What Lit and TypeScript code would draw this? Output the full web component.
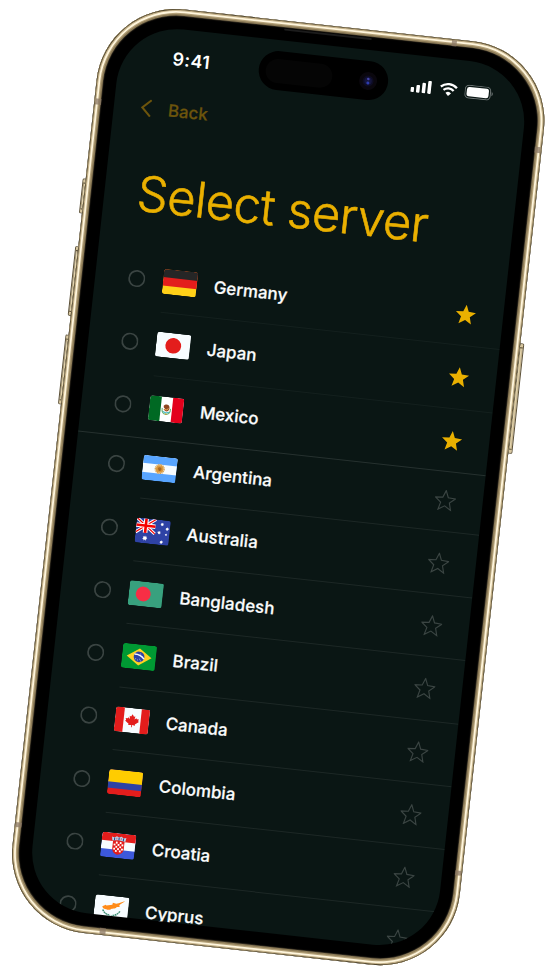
import { LitElement, html, svg, css } from "lit";
import { customElement, property } from "lit/decorators.js";
import { classMap } from "lit/directives/class-map.js";

const STAR = "M10 0.6 L12.6 7.1 L19.6 7.6 L14.2 12.1 L16 19 L10 15.2 L4 19 L5.8 12.1 L0.4 7.6 L7.4 7.1 Z";

const star = (x: number, y: number, r: number) => {
  const pts: string[] = [];
  for (let i = 0; i < 14; i++) {
    const a = (Math.PI * i) / 7 - Math.PI / 2;
    const k = i % 2 ? r * 0.55 : r;
    pts.push(`${(x + k * Math.cos(a)).toFixed(2)},${(y + k * Math.sin(a)).toFixed(2)}`);
  }
  return svg`<polygon points=${pts.join(" ")} fill="#fff"/>`;
};

const bands = (a: string, b: string, c: string, h1: number, h2: number) => svg`
  <rect width="34" height="25" fill=${c}/>
  <rect width="34" height=${h2} fill=${b}/>
  <rect width="34" height=${h1} fill=${a}/>`;

const sides = (a: string, b: string, c: string, w: number) => svg`
  <rect width="34" height="25" fill=${b}/>
  <rect width=${w} height="25" fill=${a}/>
  <rect x=${34 - w} width=${w} height="25" fill=${c}/>`;

const checks = [0, 1, 2, 3, 4].flatMap((r) => [0, 1, 2, 3, 4].map((c) => [r, c])).filter(([r, c]) => (r + c) % 2 === 1);

const flags: Record<string, unknown> = {
  Germany: bands("#262626", "#e31d1c", "#ffd018", 8.3, 16.7),
  Japan: svg`<rect width="34" height="25" fill="#f7fcff"/><circle cx="17" cy="12.5" r="7.8" fill="#e31d1c"/>`,
  Mexico: svg`${sides("#006923", "#fff", "#e3011c", 11.4)}
    <path d="M12.9 11.5c-.4 4 1.5 6 4.1 6s4.5-2 4.1-6" fill="none" stroke="#6fb27a" stroke-width="1.1"/>
    <path d="M14.1 9.2c1.4-2.2 4.800-2.400 5.700.2.9 2.400-.5 4.500-2.100 5.200-1.600-.1-2.900-.9-3.400-2.100l1.700-.4-1.600-1.300z" fill="#8f4620"/>
    <path d="M15 12.4l2 .7 2.2-1.6" fill="none" stroke="#f4b459" stroke-width=".9"/>
    <path d="M14 15l3 1.1 3-1.1" fill="none" stroke="#3cb8c4" stroke-width="1"/>
    <circle cx="17" cy="17.3" r=".8" fill="#e39c1f"/>`,
  Argentina: svg`${bands("#58a5ff", "#f7fcff", "#58a5ff", 8, 17)}
    <circle cx="17" cy="12.5" r="4.3" fill="none" stroke="#dba352" stroke-width="1.5" stroke-dasharray="1.1 .5"/>
    <circle cx="17" cy="12.5" r="3.7" fill="#db9a3c"/><circle cx="17" cy="12.5" r="2" fill="#b87327"/>
    <path d="M16 12.2h.6m.9 0h.6m-1.6 1.2h1.2" stroke="#6b3d10" stroke-width=".5"/>`,
  Australia: svg`<rect width="34" height="25" fill="#2e42a5"/>
    <rect width="19" height="14.5" fill="#2b409a"/>
    <path d="M0 0L19 14.5M19 0L0 14.5" stroke="#fff" stroke-width="3.2"/>
    <path d="M0 0L19 14.5M19 0L0 14.5" stroke="#f50100" stroke-width="1.3"/>
    <path d="M9.5 0V14.5M0 7.25H19" stroke="#fff" stroke-width="4.6"/>
    <path d="M9.5 0V14.5M0 7.25H19" stroke="#f50100" stroke-width="2.6"/>
    ${star(9.8, 19.8, 2.7)}${star(26.3, 22.1, 1.9)}${star(23.2, 12.8, 1.9)}${star(25.5, 4.4, 1.9)}${star(30.8, 8.5, 1.9)}${star(30.2, 14.2, 1.3)}`,
  Bangladesh: svg`<rect width="34" height="25" fill="#38a17e"/><circle cx="14.3" cy="12.5" r="7.4" fill="#f72e45"/>`,
  Brazil: svg`<rect width="34" height="25" fill="#009933"/>
    <path d="M17 4.1L29.3 12.5 17 21.2 4.8 12.5Z" fill="#ffd221"/>
    <circle cx="17" cy="12.5" r="5.3" fill="#2e42a5"/>
    <path d="M12.2 10.2c3.6-.3 7.2 1 9.8 3.9" fill="none" stroke="#f7fcff" stroke-width="1.5"/>
    <path d="M13.5 14.7h.8m1.2 1h.8m1.2-1h.8m0 1.6h.8m-1.2-6.8h.8" stroke="#cdd4f4" stroke-width=".8"/>`,
  Canada: svg`${sides("#e31d1c", "#f7fcff", "#e31d1c", 8.6)}
    <path d="M17 6.2l1.4 2.4 1.4-.6-.5 3.3 1.7-1.6.6 1.1 2-.2-.7 1.9 1 .7-3.8 3 .3 1.1-3-.3v2.3h-.8V17l-3 .3.3-1.1-3.8-3 1-.7-.7-1.9 2 .2.6-1.1 1.7 1.6-.5-3.3 1.4.6z" fill="#e31d1c"/>`,
  Colombia: bands("#ffcc00", "#2e42a5", "#e31d1c", 12.5, 18.8),
  Croatia: svg`${bands("#e31d1c", "#f7fcff", "#3d58db", 8.3, 16.7)}
    <path d="M11.3 7.6h11.4v7.8c0 3.6-2.6 5.6-5.7 6.2-3.1-.6-5.7-2.6-5.7-6.2z" fill="#e31d1c"/>
    ${checks.map(([r, c]) => svg`<rect x=${12.3 + c * 1.95} y=${8.6 + r * 2.1} width="1.75" height="1.9" fill="#fff"/>`)}
    <path d="M10.6 7.9l-.7-4 2.7.8 2-1.5 2.4 1 2.4-1 2 1.5 2.7-.8-.7 4c-4-1-8.800-1-12.800 0z" fill="#b9d5ee"/>
    <path d="M12.600 4.800v2.600M17 4.300V7M21.400 4.800v2.600" stroke="#2d4a8d" stroke-width="1.100"/>
    <path d="M14.800 4.600v1.900M19.200 4.600v1.900" stroke="#d8505a" stroke-width=".8"/>`,
  Cyprus: svg`<rect width="34" height="25" fill="#f7fcff"/>
    <path d="M7.800 11.300l3.300-1.900.6 .7 5.800-1.400.3-2.100 3.400.7c3.200-.9 5.900-2.100 8.500-3.600-1.600 2-4.300 3.500-5.300 4.700l.5 1.700-2.800.3c-1.500 2.600-4.600 1.300-6.300 3.500-2 .3-3.600.7-4.500-.2-2 .2-3-.9-3.500-2.400z" fill="#ff8c1a"/>
    <path d="M8.600 14.500c1.800 3.300 4.600 4.800 7.800 5.200M25.600 14.500c-1.800 3.300-4.600 4.800-7.800 5.200" fill="none" stroke="#3f8f74" stroke-width="1.500" stroke-dasharray="1.800 .5"/>`,
};

@customElement("server-row")
class ServerRow extends LitElement {
  @property() name = "";
  @property({ type: Boolean }) favorite = false;

  static styles = css`
    :host { display: flex; height: 63.25px; align-items: center; padding-left: 33px; box-sizing: border-box; position: relative; }
    .radio { display: block; width: 17.400px; height: 17.400px; fill: none; stroke: #3a4442; stroke-width: 1.700; }
    .flag { display: block; width: 34.5px; height: 25px; margin-left: 17.600px; }
    .flag svg { display: block; width: 100%; height: 100%; }
    .name { flex: 1; margin-left: 16.700px; font: 500 16.900px/24px Inter, sans-serif; color: #fbfcfc; -webkit-text-stroke: .25px #fbfcfc; letter-spacing: 0.06px; white-space: nowrap; transform: translateY(-.4px); }
    .star { display: block; width: 21px; height: 21px; margin-right: 27px; fill: none; stroke: #3b4543; stroke-width: 1.1; }
    .star.on { fill: #eab000; stroke: none; }
    .line { position: absolute; left: 69px; right: 0; bottom: 0; height: 1px; background: #1d2826; }
    :host([favorite]) .line { background: #14201e; }
    :host([last]) .line { left: 0; background: #26312f; }
  `;

  render() {
    return html`
      <svg class="radio" viewBox="0 0 17 17"><circle cx="8.5" cy="8.5" r="7.600"/></svg>
      <span class="flag"><svg viewBox="0 0 34 25" preserveAspectRatio="none">
        <defs><clipPath id="card"><rect width="34" height="25" rx="3"/></clipPath></defs>
        <g clip-path="url(#card)">${flags[this.name]}</g>
      </svg></span>
      <span class="name">${this.name}</span>
      <svg class=${classMap({ star: true, on: this.favorite })} viewBox="0 0 20 20"><path d=${STAR}/></svg>
      <span class="line"></span>`;
  }
}

@customElement("status-bar")
class StatusBar extends LitElement {
  static styles = css`
    :host { display: flex; height: 61px; align-items: center; padding: 0 34.300px 0 53.300px; box-sizing: border-box; }
    .time { font: 600 17.800px/22px Inter, sans-serif; color: #fff; letter-spacing: .5px; width: 86.300px; transform: translateY(-.4px); }
    .island { width: 130.400px; height: 38.500px; box-sizing: border-box; border-radius: 20px; background: #000; display: flex; align-items: center; justify-content: space-between; padding: 0 10.500px 0 7.500px; }
    .sensor { width: 67px; height: 24px; border-radius: 12px; background: #050505; }
    .camera { width: 18px; height: 18px; }
    .icons { display: flex; align-items: center; gap: 7.200px; margin-left: auto; transform: translateY(-.4px); }
    svg { display: block; }
  `;

  render() {
    return html`
      <span class="time">9:41</span>
      <div class="island">
        <span class="sensor"></span>
        <svg class="camera" viewBox="0 0 18 18">
          <circle cx="9" cy="9" r="9" fill="#0a070d"/><circle cx="9" cy="9" r="5.500" fill="#0d0c22"/>
          <circle cx="9" cy="9" r="3.700" fill="#15153d"/>
          <circle cx="9" cy="7" r="1.300" fill="#4444a8"/><circle cx="9" cy="11" r="1.500" fill="#2d3cae"/>
        </svg>
      </div>
      <div class="icons">
        <svg width="21" height="14" viewBox="0 0 21 14" fill="#fff">
          <rect x="0" y="8.500" width="3.500" height="5" rx="1"/><rect x="5.700" y="5.900" width="3.500" height="7.600" rx="1"/>
          <rect x="11.400" y="3.200" width="3.500" height="10.300" rx="1"/><rect x="17" y=".6" width="3.500" height="12.900" rx="1"/>
        </svg>
        <svg width="18" height="14" viewBox="0 0 18 14">
          <path d="M.9 4.900a11.700 11.700 0 0 1 16.200 0" fill="none" stroke="#fff" stroke-width="2.300"/>
          <path d="M3.900 8a7.400 7.400 0 0 1 10.200 0" fill="none" stroke="#fff" stroke-width="2.200"/>
          <path d="M9 13.600L6.200 10.700a4.100 4.100 0 0 1 5.600 0z" fill="#fff"/>
        </svg>
        <svg width="29" height="14" viewBox="0 0 29 14">
          <rect x=".5" y=".5" width="25.500" height="12.800" rx="4" fill="none" stroke="#6f7776" stroke-width="1"/>
          <rect x="2.200" y="2.200" width="22.100" height="9.400" rx="2.500" fill="#fff"/>
          <path d="M27.200 4.800c1.600.7 1.600 3.600 0 4.300z" fill="#6f7776"/>
        </svg>
      </div>`;
  }
}

@customElement("app-root")
class AppRoot extends LitElement {
  private favorites = ["Germany", "Japan", "Mexico"];
  private others = ["Argentina", "Australia", "Bangladesh", "Brazil", "Canada", "Colombia", "Croatia", "Cyprus"];

  static styles = css`
    :host { display: flex; width: 556px; height: 973px; align-items: center; justify-content: center; background: #fff; overflow: hidden; }
    .phone { position: relative; flex: none; width: 450px; height: 929px; transform: translate(.2px, .6px) rotate(6.270deg); }
    .shell { position: relative; box-sizing: border-box; width: 450px; height: 929px; border-radius: 80px; background: #000; padding: 20px; box-shadow:
      inset 0 0 0 .8px #51472f, inset 0 0 0 2px #c5b28a, inset 0 0 0 3.800px #fff6dd, inset 0 0 0 5px #b3a078, inset 0 0 0 6.500px #8d7c58, inset 0 0 1px 7.200px #393225; }
    .screen { height: 889px; border-radius: 61px; background: #0a1614; overflow: hidden; }
    .back { display: flex; align-items: center; height: 22px; margin-top: 10px; padding-left: 27px; color: #6c540c; font: 500 16.900px/22px Inter, sans-serif; -webkit-text-stroke: .25px #6c540c; }
    .back svg { width: 11px; height: 18px; margin-right: 16.500px; fill: none; stroke: #6c540c; stroke-width: 2.100; }
    h1 { margin: 45px 0 0 33px; height: 60px; font: 300 49px/60px Inter, sans-serif; -webkit-text-stroke: .6px #eab000; letter-spacing: -.55px; color: #eab000; white-space: nowrap; }
    .favorites { padding-top: 23px; }
    .others { margin-top: -3.200px; }
    .slit { position: absolute; left: 181px; top: 7.500px; width: 88px; height: 2px; border-radius: 1px; background: #1c1c1c; }
    .band { position: absolute; background: #8b7866; opacity: .75; }
    .v { width: 6px; height: 5.500px; }
    .h { width: 5.500px; height: 6px; }
    .l { left: .8px; } .r { right: .8px; } .t { top: .8px; } .b { bottom: .8px; }
    .up { top: 98px; } .down { bottom: 98px; } .near { left: 96px; } .far { right: 96px; }
    .key { position: absolute; box-sizing: border-box; width: 5px; background: linear-gradient(90deg, #8a7b58, #e5d6b0 40%, #b8a57d); border: .8px solid #5b4f35; border-radius: 1.500px; }
    .key::before, .key::after { content: ""; position: absolute; left: 0; right: 0; height: 3px; background: #d9c8a0; border: solid #51462e; border-width: 0 0 1px; }
    .key::before { top: 0; }
    .key::after { bottom: 0; border-width: 1px 0 0; }
    .action { left: -3.500px; top: 179px; height: 35px; }
    .volup { left: -3.500px; top: 246.500px; height: 70px; }
    .voldown { left: -3.500px; top: 335.500px; height: 70px; }
    .power { right: -3.500px; top: 295px; height: 111px; }
  `;

  render() {
    return html`
      <div class="phone">
        <i class="key action"></i><i class="key volup"></i><i class="key voldown"></i><i class="key power"></i>
        <div class="shell">
          <i class="slit"></i>
          <i class="band v l up"></i><i class="band v r up"></i><i class="band v l down"></i><i class="band v r down"></i>
          <i class="band h t far"></i><i class="band h b near"></i>
          <main class="screen">
            <status-bar></status-bar>
            <nav class="back"><svg viewBox="0 0 11 18"><path d="M10 .8L1.500 9 10 17.200"/></svg><span>Back</span></nav>
            <h1>Select server</h1>
            <section class="favorites">
              ${this.favorites.map((n, i) => html`<server-row .name=${n} favorite ?last=${i === 2}></server-row>`)}
            </section>
            <section class="others">${this.others.map((n) => html`<server-row .name=${n}></server-row>`)}</section>
          </main>
        </div>
      </div>`;
  }
}
